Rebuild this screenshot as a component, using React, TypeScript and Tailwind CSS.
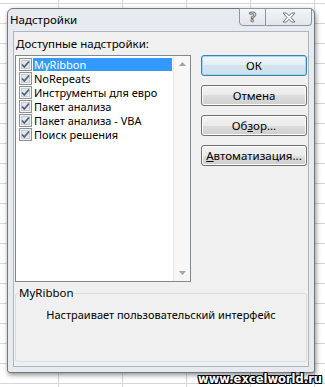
import React from 'react';

const addins = ['MyRibbon', 'NoRepeats', 'Инструменты для евро', 'Пакет анализа', 'Пакет анализа - VBA', 'Поиск решения'];

function CheckBox() {
    return (
        <svg width="13" height="13" viewBox="0 0 13 13" className="shrink-0">
            <rect x="0.5" y="0.5" width="12" height="12" fill="#f4f4f4" stroke="#8e8f8f" />
            <rect x="2.5" y="2.5" width="8" height="8" fill="#e3e6ea" stroke="#c5ccd4" />
            <path d="M3 6.5 L5.3 9 L10 3.5" fill="none" stroke="#4d6185" strokeWidth="1.8" />
        </svg>
    );
}

function DlgButton({ children, primary = false }: { children: React.ReactNode; primary?: boolean }) {
    return (
        <button
            className={
                primary
                    ? 'h-[21px] w-full rounded-[3px] border border-[#3c7fb1] bg-[linear-gradient(#f0f7fb,#e3eef5_50%,#d3e4ef_50%,#cfe0eb)] shadow-[inset_0_0_0_1px_#9fd8f0] text-[11.5px] leading-[19px] text-black'
                    : 'h-[21px] w-full rounded-[3px] border border-[#707070] bg-[linear-gradient(#f2f2f2,#ebebeb_50%,#dddddd_50%,#cfcfcf)] shadow-[inset_0_0_0_1px_#fcfcfc] text-[11.5px] leading-[19px] text-black'
            }
        >
            {children}
        </button>
    );
}

export default function App() {
    return (
        <div className="relative w-[325px] h-[387px] overflow-hidden bg-white bg-[linear-gradient(to_right,#d6d6d6_1px,transparent_1px),linear-gradient(to_bottom,#d6d6d6_1px,transparent_1px)] bg-size-[64px_20px] bg-position-[58px_3px] font-['Noto_Sans',sans-serif]">
            {/* Dialog window */}
            <div className="absolute left-[7px] top-[8px] w-[308px] h-[365px] flex flex-col rounded-t-[6px] rounded-b-[3px] border border-[#6f7984] bg-[#e7ebef] shadow-[1px_2px_5px_rgba(0,0,0,0.45)]">
                {/* Title bar */}
                <div className="h-[22px] flex items-start">
                    <span className="pl-[2px] pt-[3px] text-[11.5px] leading-[16px] text-black">Надстройки</span>
                    <div className="ml-auto mr-[2px] flex -mt-px">
                        <div className="w-[27px] h-[18px] flex items-center justify-center rounded-bl-[4px] border border-[#8a96a3] bg-[linear-gradient(#f3f5f7,#e1e6eb)] text-[14px] font-bold leading-none text-white [-webkit-text-stroke:1px_#6b7580]">
                            ?
                        </div>
                        <div className="w-[46px] h-[18px] flex items-center justify-center rounded-br-[4px] border border-l-0 border-[#8a96a3] bg-[linear-gradient(#f3f5f7,#e1e6eb)]">
                            <svg width="14" height="11" viewBox="0 0 14 11">
                                <path d="M1 1 H4.5 L7 3.8 L9.5 1 H13 L9 5.5 L13 10 H9.5 L7 7.2 L4.5 10 H1 L5 5.5 Z" fill="#fafbfc" stroke="#6b7580" strokeWidth="1" strokeLinejoin="round" />
                            </svg>
                        </div>
                    </div>
                </div>

                {/* Client area */}
                <div className="mx-[5px] h-[336px] border border-[#aeb6bf] bg-[#f0f0f0] flex flex-col text-[11px] text-black">
                    <div className="pt-[4px] pl-[2px] leading-[16px] text-[11.5px]">
                        <span className="underline">Д</span>оступные надстройки:
                    </div>
                    <div className="mt-[3px] flex gap-[10px] pl-px pr-px">
                        {/* List box */}
                        <div className="w-[176px] h-[227px] border border-[#828790] bg-white flex">
                            <div className="flex-1 pt-px pl-[3px]">
                                {addins.map((name, i) => (
                                    <div key={name} className="h-[14px] flex items-center">
                                        <CheckBox />
                                        <span
                                            className={
                                                i === 0
                                                    ? 'ml-px flex-1 h-[13px] leading-[13px] bg-[#3399ff] text-white pl-px'
                                                    : 'ml-px flex-1 h-[13px] leading-[13px] pl-px'
                                            }
                                        >
                                            {name}
                                        </span>
                                    </div>
                                ))}
                            </div>
                            {/* Scrollbar */}
                            <div className="w-[17px] ml-px border-l border-[#e8e8e8] bg-[#f7f7f7] flex flex-col justify-between items-center py-[6px]">
                                <svg width="7" height="4" viewBox="0 0 7 4">
                                    <path d="M0 4 L3.5 0 L7 4 Z" fill="#a3a3a3" />
                                </svg>
                                <svg width="7" height="4" viewBox="0 0 7 4">
                                    <path d="M0 0 L7 0 L3.5 4 Z" fill="#a3a3a3" />
                                </svg>
                            </div>
                        </div>
                        {/* Buttons */}
                        <div className="w-[106px] flex flex-col gap-[9px]">
                            <DlgButton primary>ОК</DlgButton>
                            <DlgButton>Отмена</DlgButton>
                            <DlgButton>
                                Об<span className="underline">з</span>ор...
                            </DlgButton>
                            <DlgButton>
                                <span className="underline">А</span>втоматизация...
                            </DlgButton>
                        </div>
                    </div>
                    {/* Description group */}
                    <fieldset className="mt-[3px] mx-px h-[77px] rounded-[3px] border border-[#d5dfe5] px-[3px] pt-[6px]">
                        <legend className="px-0 leading-[16px] text-[11.5px]">MyRibbon</legend>
                        <p className="text-center leading-[16px] text-[11px]">Настраивает пользовательский интерфейс</p>
                    </fieldset>
                </div>
            </div>

            {/* Watermark */}
            <div className="absolute right-[3px] bottom-[1px] text-[11.5px] font-bold leading-[14px] text-white font-['DejaVu_Sans',sans-serif] [text-shadow:1px_0_#000,-1px_0_#000,0_1px_#000,0_-1px_#000,1px_1px_#000,-1px_-1px_#000,1px_-1px_#000,-1px_1px_#000]">
                www.excelworld.ru
            </div>
        </div>
    );
}
